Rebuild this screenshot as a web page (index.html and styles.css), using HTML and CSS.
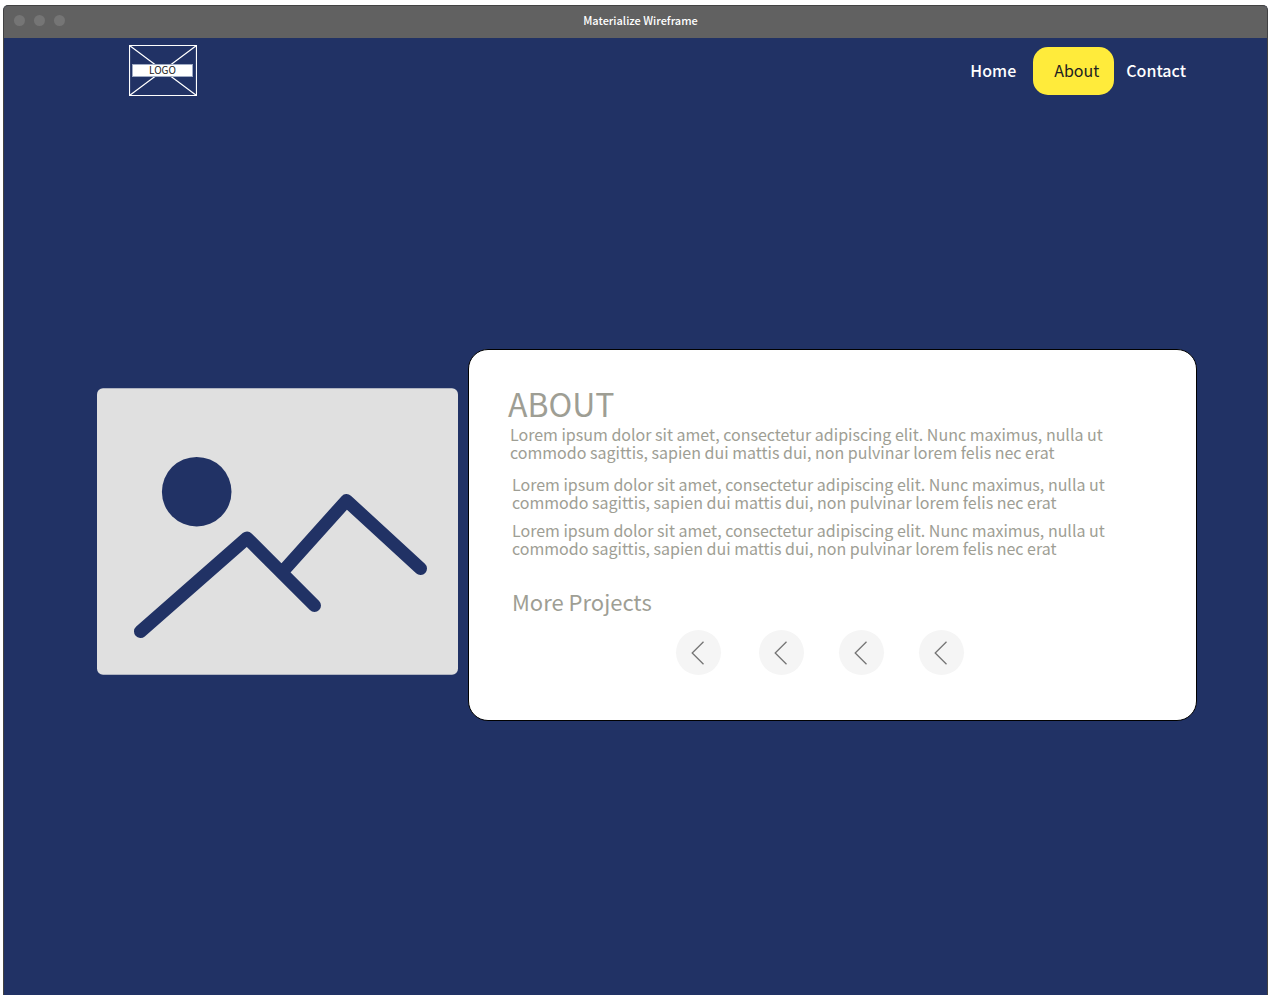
FILE: index.html
```html
<!DOCTYPE html>
<html lang="en">
<head>
<meta charset="utf-8">
<title>Materialize Wireframe</title>
<link rel="stylesheet" href="styles.css">
</head>
<body>
<div class="window">
  <div class="titlebar">
    <div class="dots"><span class="dot"></span><span class="dot"></span><span class="dot"></span></div>
    <div class="title">Materialize Wireframe</div>
  </div>
  <header class="header">
    <a class="logo" href="#">
      <svg class="logo-cross" viewBox="0 0 68 51" preserveAspectRatio="none" aria-hidden="true">
        <path d="M.5 .5H67.5V50.5H.5ZM.5 .5L67.5 50.5M67.5 .5L.5 50.5" fill="none" stroke="#fff" stroke-width="1.2"/>
      </svg>
      <span class="logo-text">LOGO</span>
    </a>
    <nav class="nav">
      <a class="nav-link" href="#">Home</a>
      <a class="nav-link active" href="#" aria-current="page">About</a>
      <a class="nav-link" href="#">Contact</a>
    </nav>
  </header>
  <main class="main">
    <svg class="picture" viewBox="0 0 361 287" role="img" aria-label="Image placeholder">
      <rect y=".3" width="361" height="286.4" rx="6" fill="#e0e0e0"/>
      <circle cx="99.7" cy="103.7" r="34.8" fill="#213265"/>
      <path d="M43.5 243.5L150 150L217.500 217.500M188 181L249.500 112.500L323.500 180.500" fill="none" stroke="#213265" stroke-width="13" stroke-linecap="round" stroke-linejoin="round"/>
    </svg>
    <section class="card">
      <h1 class="heading">ABOUT</h1>
      <p class="text lead">Lorem ipsum dolor sit amet, consectetur adipiscing elit. Nunc maximus, nulla ut commodo sagittis, sapien dui mattis dui, non pulvinar lorem felis nec erat</p>
      <p class="text">Lorem ipsum dolor sit amet, consectetur adipiscing elit. Nunc maximus, nulla ut commodo sagittis, sapien dui mattis dui, non pulvinar lorem felis nec erat</p>
      <p class="text">Lorem ipsum dolor sit amet, consectetur adipiscing elit. Nunc maximus, nulla ut commodo sagittis, sapien dui mattis dui, non pulvinar lorem felis nec erat</p>
      <h2 class="subheading">More Projects</h2>
      <div class="projects">
        <button class="project" type="button" aria-label="Project 1"><svg class="chevron" viewBox="0 0 14 24"><path d="M12.500 .8L1.200 12L12.500 23.200"/></svg></button>
        <button class="project" type="button" aria-label="Project 2"><svg class="chevron" viewBox="0 0 14 24"><path d="M12.500 .8L1.200 12L12.500 23.200"/></svg></button>
        <button class="project" type="button" aria-label="Project 3"><svg class="chevron" viewBox="0 0 14 24"><path d="M12.500 .8L1.200 12L12.500 23.200"/></svg></button>
        <button class="project" type="button" aria-label="Project 4"><svg class="chevron" viewBox="0 0 14 24"><path d="M12.500 .8L1.200 12L12.500 23.200"/></svg></button>
      </div>
    </section>
  </main>
</div>
</body>
</html>
```
FILE: styles.css
```css
* { box-sizing: border-box; }
body {
  margin: 0;
  background: #fff;
  font-family: "Noto Sans CJK SC", "Noto Sans", sans-serif;
}
.window {
  display: flex;
  flex-direction: column;
  min-height: calc(100vh - 5px);
  margin: 5px 2px 0 3px;
  border: 1px solid #424242;
  border-bottom: 0;
  border-radius: 5px 5px 0 0;
  background: #213265;
  overflow: hidden;
}
.titlebar {
  display: grid;
  grid-template-columns: 1fr auto 1fr;
  align-items: center;
  height: 32px;
  padding: 0 10px;
  background: #616161;
}
.dots { display: flex; gap: 9px; padding-bottom: 4px; }
.dot { width: 11px; height: 11px; border-radius: 50%; background: #757575; }
.title {
  padding: 0 0 4px 10px;
  color: #fff;
  font-size: 11px;
  line-height: 16px;
  font-weight: 500;
}
.header {
  display: flex;
  justify-content: space-between;
  align-items: flex-start;
  padding: 7px 68px 0 125px;
}
.logo {
  display: grid;
  align-items: center;
  width: 68px;
  height: 51px;
  text-decoration: none;
}
.logo-cross { grid-area: 1 / 1; width: 68px; height: 51px; }
.logo-text {
  grid-area: 1 / 1;
  width: 61px;
  margin-left: 3px;
  padding-bottom: 2px;
  border: 1px solid #9fabc4;
  background: #fff;
  color: #212121;
  font-size: 10px;
  line-height: 9px;
  text-align: center;
}
.nav { display: flex; padding-top: 2px; }
.nav-link {
  padding: 0 13px 2px 17px;
  color: #fff;
  font-size: 16px;
  line-height: 46px;
  font-weight: 500;
  text-decoration: none;
}
.nav-link:first-child { padding-right: 17px; }
.nav-link:last-child { padding-left: 12px; }
.nav-link.active {
  padding: 0 15px 2px 21px;
  border-radius: 15px;
  background: #ffeb3b;
  color: #212121;
  font-weight: 400;
}
.main {
  display: grid;
  grid-template-columns: minmax(0, 361fr) minmax(0, 729fr);
  align-items: center;
  gap: 10px;
  padding: 253px 70px 20px 93px;
}
.picture { width: 100%; margin-bottom: 8px; }
.card {
  padding: 33px 79px 45px 43px;
  border: 1px solid #000;
  border-radius: 20px;
  background: #fff;
  color: #9e9e94;
}
.heading {
  margin: 0 0 2px -4px;
  font-size: 32px;
  line-height: 40px;
  font-weight: 400;
}
.text {
  margin: 0 0 10px;
  font-size: 16px;
  line-height: 18px;
}
.lead { margin: 0 0 14px -2px; }
.subheading {
  margin: 28px 0 13px;
  font-size: 22px;
  line-height: 32px;
  font-weight: 400;
}
.projects {
  display: flex;
  justify-content: center;
  gap: 35px;
  padding-left: 10px;
}
.project {
  display: grid;
  place-items: center;
  width: 45px;
  height: 45px;
  padding: 0;
  border: 0;
  border-radius: 50%;
  background: #f5f5f5;
}
.project:first-child { margin-right: 3px; }
.chevron { width: 14px; height: 24px; fill: none; stroke: #757575; stroke-width: 1.3; }
```
